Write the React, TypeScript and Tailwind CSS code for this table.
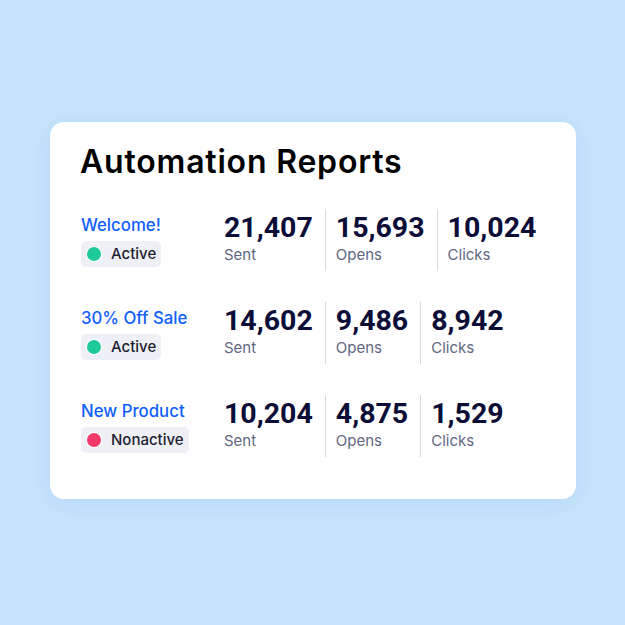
type Stat = { value: string; label: string };

type Report = {
  name: string;
  active: boolean;
  stats: Stat[];
};

const reports: Report[] = [
  {
    name: "Welcome!",
    active: true,
    stats: [
      { value: "21,407", label: "Sent" },
      { value: "15,693", label: "Opens" },
      { value: "10,024", label: "Clicks" },
    ],
  },
  {
    name: "30% Off Sale",
    active: true,
    stats: [
      { value: "14,602", label: "Sent" },
      { value: "9,486", label: "Opens" },
      { value: "8,942", label: "Clicks" },
    ],
  },
  {
    name: "New Product",
    active: false,
    stats: [
      { value: "10,204", label: "Sent" },
      { value: "4,875", label: "Opens" },
      { value: "1,529", label: "Clicks" },
    ],
  },
];

function StatusBadge({ active }: { active: boolean }) {
  return (
    <div className="inline-flex items-center h-[26px] rounded-[5px] bg-[#eef0f6] pl-[6px] pr-[5px] gap-[10px]">
      <span
        className={
          active
            ? "w-[14px] h-[14px] rounded-full bg-[#1ec99a] ring-1 ring-white"
            : "w-[14px] h-[14px] rounded-full bg-[#f23a68] ring-1 ring-white"
        }
      />
      <span className="text-[15px] font-medium text-[#1e2230] leading-none">
        {active ? "Active" : "Nonactive"}
      </span>
    </div>
  );
}

function ReportRow({ report }: { report: Report }) {
  return (
    <div className="flex items-center">
      {/* Name + status */}
      <div className="w-[143px] shrink-0 flex flex-col items-start gap-[5px]">
        <span className="text-[16.8px] leading-[22px] font-medium text-[#1060ff] whitespace-nowrap">
          {report.name}
        </span>
        <StatusBadge active={report.active} />
      </div>

      {/* Stats */}
      <div className="flex shrink-0">
        {report.stats.map((s, i) => (
          <div
            key={s.label}
            className={
              i === 0
                ? "shrink-0 pr-[12px] pt-[3px] pb-[5px]"
                : "shrink-0 border-l border-[#d3d8e3] pl-[10px] pr-[12px] pt-[3px] pb-[5px]"
            }
          >
            <div className="font-['Roboto',sans-serif] text-[28.5px] leading-[32px] font-bold text-[#0c0e38]">
              {s.value}
            </div>
            <div className="text-[15px] leading-[22px] text-[#5f6782]">{s.label}</div>
          </div>
        ))}
      </div>
    </div>
  );
}

export default function App() {
  return (
    <div className="w-[625px] h-[625px] bg-[#c5e4fd] pt-[122px] pl-[50px] font-['Inter',sans-serif]">
      <div className="w-[526px] h-[377px] rounded-[14px] bg-white shadow-[0_4px_24px_rgba(40,90,150,0.08)] pl-[30px] pr-[20px] pt-[21px]">
        <h1 className="text-[32px] leading-[38px] font-semibold text-black tracking-[0.8px]">
          Automation Reports
        </h1>
        <div className="mt-[28px] flex flex-col gap-[31px] pl-[1px]">
          {reports.map((r) => (
            <ReportRow key={r.name} report={r} />
          ))}
        </div>
      </div>
    </div>
  );
}
